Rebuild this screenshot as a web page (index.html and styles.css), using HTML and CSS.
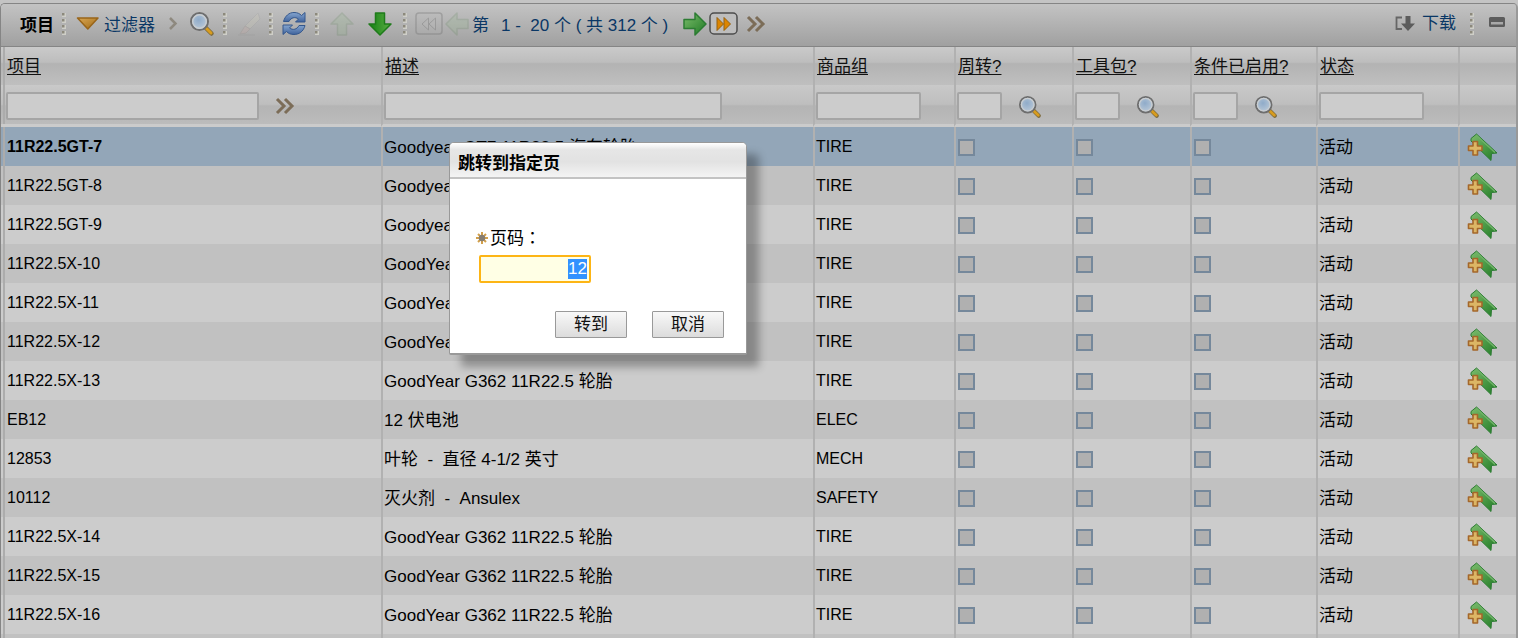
FILE: index.html
```html
<!DOCTYPE html>
<html lang="zh-CN">
<head>
<meta charset="utf-8">
<title>项目</title>
<link rel="stylesheet" href="styles.css">
</head>
<body>
<svg class="defs" aria-hidden="true">
  <defs>
    <linearGradient id="gGreen" x1="0" y1="0" x2="1" y2="1"><stop offset="0" stop-color="#7cbc6c"/><stop offset="1" stop-color="#1f7a24"/></linearGradient>
    <linearGradient id="gDown" x1="0" y1="0" x2="0" y2="1"><stop offset="0" stop-color="#5cae45"/><stop offset="1" stop-color="#138012"/></linearGradient>
    <linearGradient id="gBlue" x1="0" y1="0" x2="0" y2="1"><stop offset="0" stop-color="#86a6d0"/><stop offset="1" stop-color="#3f639c"/></linearGradient>
    <linearGradient id="gGold" x1="0" y1="0" x2="1" y2="1"><stop offset="0" stop-color="#d9a755"/><stop offset="1" stop-color="#a06a14"/></linearGradient>
    <radialGradient id="gLens" cx=".45" cy=".4" r=".6"><stop offset="0" stop-color="#8fabc9"/><stop offset="1" stop-color="#bccad8"/></radialGradient>
    <symbol id="sep" viewBox="0 0 4 24">
      <g fill="#cfcfc8"><path d="M0 1h4v4H0zM0 7h4v4H0zM0 13h4v4H0zM0 19h4v4H0z"/></g>
      <g fill="#8c897c"><path d="M0 1h2.500v2.500H0zM0 7h2.500v2.500H0zM0 13h2.500v2.500H0zM0 19h2.500v2.500H0z"/></g>
    </symbol>
    <symbol id="lens" viewBox="0 0 26 26">
      <path d="M16 16l6.500 6.500" stroke="#7d6a3c" stroke-width="4.500" stroke-linecap="round"/>
      <path d="M17.500 17.500l4.500 4.500" stroke="#d89c1e" stroke-width="3" stroke-linecap="round"/>
      <circle cx="10.500" cy="10.500" r="8.500" fill="url(#gLens)" stroke="#6e6e6e" stroke-width="2"/>
      <circle cx="10.500" cy="10.500" r="6.800" fill="none" stroke="#c9cdd0" stroke-width="1.400"/>
    </symbol>
    <symbol id="more" viewBox="0 0 20 18">
      <path d="M2 2l7 7-7 7M10 2l7 7-7 7" fill="none" stroke="#7c6d58" stroke-width="3"/>
    </symbol>
    <symbol id="mark" viewBox="0 0 32 30">
      <path d="M4 6.500L9.500 2 30 21l-5.500.5-.5 7L4 9z" fill="url(#gGreen)" stroke="#2c7c33" stroke-width="1"/>
      <path d="M9.500 3.500L28 20.500" stroke="#6fb267" stroke-width="1.500"/>
      <path d="M6 9.500h4.500V14H15v4.500h-4.500V23H6v-4.500H1.500V14H6z" fill="#dcb665" stroke="#a4672b" stroke-width="1.600" stroke-linejoin="round"/>
    </symbol>
    <symbol id="arrow" viewBox="0 0 24 26">
      <path d="M1 8.500h11V2l11 11-11 11v-6.500H1z" stroke-width="1.500" stroke-linejoin="round"/>
    </symbol>
  </defs>
</svg>

<main class="panel">
  <header class="toolbar">
    <h1 class="title">项目</h1>
    <svg class="sep"><use href="#sep"/></svg>
    <button class="tool filter" type="button">
      <svg width="26" height="18" viewBox="0 0 26 18"><path d="M3.500 3h20.500L13.800 14z" fill="url(#gGold)" stroke="#99651a" stroke-width="1.500" stroke-linejoin="round"/></svg>
      <span class="caption">过滤器</span>
    </button>
    <svg width="18" height="18" viewBox="0 0 18 18"><path d="M7 3l5.500 5.500L7 14" fill="none" stroke="#8e897f" stroke-width="2.500"/></svg>
    <button class="tool" type="button" aria-label="搜索"><svg width="26" height="26"><use href="#lens"/></svg></button>
    <svg class="sep"><use href="#sep"/></svg>
    <button class="tool faded" type="button" aria-label="清除">
      <svg width="26" height="26" viewBox="0 0 26 26"><path d="M23 2l2 6-10 10-5-3z" fill="#d8d5bd" stroke="#999"/><path d="M10 15l5 3-4 4-6 1z" fill="#d3aba4" stroke="#97837d"/><path d="M3 24h17" stroke="#888"/></svg>
    </button>
    <svg class="sep"><use href="#sep"/></svg>
    <button class="tool" type="button" aria-label="刷新">
      <svg width="26" height="26" viewBox="0 0 26 26" fill="url(#gBlue)" stroke="#34578c" stroke-width="1" stroke-linejoin="round"><path d="M2.500 10.500C4 5 8 1.500 13 1.500c3.500 0 5.500 1 7.500 3L24 1.500V11H14.500l3-3C14 5.500 10 6.500 8 10.500z"/><path d="M24 14.500c-1.500 6-6 9-11 9-3.500 0-5.500-1-7.500-3L2 23.500V14h9.500l-3 3c3.500 2.500 7.500 1.500 9.500-2.500z"/></svg>
    </button>
    <svg class="sep"><use href="#sep"/></svg>
    <button class="tool faded wide" type="button" aria-label="上一行"><svg width="24" height="26" fill="#8cb884" stroke="#56804f"><use href="#arrow" transform="rotate(-90 12 13)"/></svg></button>
    <button class="tool wide" type="button" aria-label="下一行"><svg width="24" height="26" fill="url(#gDown)" stroke="#1f7b1b"><use href="#arrow" transform="rotate(90 12 13)"/></svg></button>
    <svg class="sep"><use href="#sep"/></svg>
    <div class="pager">
      <button class="tool faded-box" type="button" aria-label="第一页"><svg width="28" height="24" viewBox="0 0 28 24"><rect x="1" y="1" width="26" height="21" rx="3" fill="none" stroke="#777" stroke-width="1.500"/><path d="M13.500 6v12L7 12zM20.500 6v12L14 12z" fill="#b8b8b8" stroke="#777"/></svg></button>
      <button class="tool faded" type="button" aria-label="上一页"><svg width="24" height="26" fill="#8cb884" stroke="#56804f"><use href="#arrow" transform="rotate(180 12 13)"/></svg></button>
      <span class="range"><span>第</span><span>1 -&nbsp; 20 个 ( 共 312 个 )</span></span>
      <button class="tool" type="button" aria-label="下一页"><svg width="24" height="26" fill="url(#gGreen)" stroke="#2c7c33"><use href="#arrow"/></svg></button>
      <button class="tool" type="button" aria-label="跳转到指定页"><svg width="29" height="24" viewBox="0 0 29 24"><rect x="1" y="1" width="27" height="21" rx="4" fill="#bdbdbd" stroke="#4c4c4c" stroke-width="1.500"/><path d="M8 5.500l6.500 6.500L8 18.500zM15 5.500l6.500 6.500-6.500 6.500z" fill="#dc8500" stroke="#95600f"/></svg></button>
    </div>
    <button class="tool" type="button" aria-label="更多"><svg width="20" height="18"><use href="#more"/></svg></button>
    <div class="toolbar-end">
      <button class="tool download" type="button">
        <svg width="22" height="20" viewBox="0 0 22 20"><path d="M8 3.500H2.500V15H8" fill="none" stroke="#666" stroke-width="1.800"/><path d="M11.500 2h5v7.500H21l-7 7.500-7-7.500h4.500z" fill="#5c5c5c"/></svg>
        下载
      </button>
      <svg class="sep"><use href="#sep"/></svg>
      <button class="tool minimise" type="button" aria-label="最小化"><svg width="18" height="12" viewBox="0 0 18 12"><rect x="1" y="1" width="16" height="10" rx="1.500" fill="#5c5c5c"/><path d="M3 6h12v2.500H3z" fill="#a8a8a8"/></svg></button>
    </div>
  </header>

  <table class="grid">
    <colgroup>
      <col class="c-item"><col><col class="c-group"><col class="c-flag"><col class="c-flag"><col class="c-cond"><col class="c-status"><col class="c-mark">
    </colgroup>
    <thead>
      <tr class="heads">
        <th scope="col"><a href="#item">项目</a></th>
        <th scope="col"><a href="#desc">描述</a></th>
        <th scope="col"><a href="#group">商品组</a></th>
        <th scope="col"><a href="#rotate">周转?</a></th>
        <th scope="col"><a href="#kit">工具包?</a></th>
        <th scope="col"><a href="#cond">条件已启用?</a></th>
        <th scope="col"><a href="#status">状态</a></th>
        <td></td>
      </tr>
      <tr class="filters">
        <td><div class="cell"><input class="f-item" type="text" aria-label="项目"><button class="tool" type="button" aria-label="项目选项"><svg width="20" height="18"><use href="#more"/></svg></button></div></td>
        <td><div class="cell"><input class="f-desc" type="text" aria-label="描述"></div></td>
        <td><div class="cell"><input class="f-mid" type="text" aria-label="商品组"></div></td>
        <td><div class="cell"><input class="f-flag" type="text" aria-label="周转?"><button class="tool find" type="button" aria-label="查找周转"><svg width="24" height="24"><use href="#lens"/></svg></button></div></td>
        <td><div class="cell"><input class="f-flag" type="text" aria-label="工具包?"><button class="tool find" type="button" aria-label="查找工具包"><svg width="24" height="24"><use href="#lens"/></svg></button></div></td>
        <td><div class="cell"><input class="f-flag" type="text" aria-label="条件已启用?"><button class="tool find" type="button" aria-label="查找条件已启用"><svg width="24" height="24"><use href="#lens"/></svg></button></div></td>
        <td><div class="cell"><input class="f-mid" type="text" aria-label="状态"></div></td>
        <td></td>
      </tr>
    </thead>
    <tbody id="rows"></tbody>
  </table>
</main>

<section class="dialog" role="dialog" aria-labelledby="dlg-title">
  <h2 class="dialog-title" id="dlg-title">跳转到指定页</h2>
  <form class="dialog-body">
    <label class="page-label" for="page">
      <svg width="12" height="12" viewBox="0 0 12 12"><path d="M6 0v12M0 6h12M2 2l8 8M10 2l-8 8" stroke="#d3a04a" stroke-width="2"/><circle cx="6" cy="6" r="3.200" fill="#857d72"/></svg>
      <span>页码<span lang="zh-TW">：</span></span>
    </label>
    <input class="page-input" id="page" type="text" value="12">
    <div class="actions">
      <button class="btn" type="button">转到</button>
      <button class="btn" type="button">取消</button>
    </div>
  </form>
</section>
<script src="app.js"></script>
</body>
</html>
```

FILE: styles.css
```css
* { box-sizing: border-box; }

body {
  margin: 0;
  height: 100vh;
  overflow: hidden;
  background: #c4c4c4;
  color: #000;
  font: 16px/20px "Liberation Sans", "Noto Sans CJK SC", sans-serif;
}

svg { display: block; flex: none; }
.defs { position: absolute; width: 0; height: 0; }

.panel {
  max-height: calc(100vh - 3px);
  margin-top: 3px;
  border: 1px solid #858585;
  border-right: 2px solid #999;
  border-bottom: 0;
  border-radius: 5px 5px 0 0;
  overflow: hidden;
}

.toolbar {
  display: flex;
  align-items: center;
  gap: 8px;
  height: 43px;
  padding: 0 10px 2px 19px;
  border-bottom: 1px solid #858585;
  background: linear-gradient(#c3c3c3, #a0a0a0);
}

.title { margin: 0; padding-top: 4px; font-size: 17px; font-weight: 700; }
.sep { width: 4px; height: 24px; }

.tool {
  display: flex;
  align-items: center;
  justify-content: center;
  flex: none;
  padding: 0;
  border: 0;
  background: none;
  color: #0a3765;
  font: inherit;
  font-size: 17px;
}
.wide { width: 30px; }
.faded { opacity: .2; }
.faded-box { opacity: .4; }
.filter { gap: 4px; }
.caption { padding-top: 3px; }
.download { gap: 6px; }

.pager { display: flex; align-items: center; gap: 2px; }
.range {
  display: flex;
  gap: 12px;
  min-width: 210px;
  padding: 3px 0 0 1px;
  color: #0a3765;
  font-size: 17px;
  white-space: nowrap;
}
.toolbar-end { display: flex; align-items: center; gap: 14px; margin-left: auto; }
.minimise { padding-bottom: 5px; }

.grid {
  width: 100%;
  table-layout: fixed;
  border-spacing: 0;
}
.c-item { width: 380px; }
.c-group { width: 141px; }
.c-flag { width: 118px; }
.c-cond { width: 126px; }
.c-status { width: 142px; }
.c-mark { width: 58px; }

.grid th,
.grid td {
  height: 39px;
  padding: 0 0 0 1px;
  border-left: 2px solid #b1b1b1;
  text-align: left;
  font-weight: 400;
  white-space: nowrap;
}
.grid th:first-child,
.grid td:first-child {
  padding-left: 6px;
  border-left: 0;
  background: linear-gradient(#acacac, #acacac) 2px 0 / 2px 100% no-repeat;
}
.grid .heads th,
.grid .heads td { height: 38px; padding: 2px 0 0 2px; font-size: 17px; }
.grid .heads th:first-child { padding-left: 6px; }
.heads { background: linear-gradient(#cacaca, #bdbdbd 40%, #b3b3b3 44%, #bfbfbf); }
.heads a { color: #111; text-decoration: underline; text-underline-offset: 2px; }

.filters { background: linear-gradient(#c9c9c9, #bebebe 46%, #b4b4b4 50%, #bdbdbd); }
.grid .filters td { height: 42px; border-bottom: 3px solid #cbcbcb; }
.grid .filters td:first-child { padding-left: 5px; }
.cell { display: flex; align-items: center; gap: 16px; padding-top: 2px; }
.cell input {
  height: 28px;
  min-width: 0;
  padding: 0 4px;
  border: 2px solid #a5a5a5;
  border-radius: 2px;
  background: #cccccc;
  font: inherit;
}
.cell .find { padding-top: 3px; }
.f-item { width: 253px; }
.f-desc { width: 338px; }
.f-mid { width: 105px; }
.f-flag { width: 45px; }

tbody tr { background: #cccccc; }
tbody tr:nth-child(even) { background: #c1c1c1; }
tbody tr.selected { background: #93a6b8; }
.selected td:first-child { font-weight: 700; }
.grid td.desc { padding-top: 2px; font-size: 17px; }
.grid td.status { padding-top: 2px; font-size: 17px; }
.grid td.mark { padding-left: 7px; }
.grid td.flag { padding: 2px 0 0 2px; }
.flag input {
  display: block;
  appearance: none;
  width: 17px;
  height: 17px;
  margin: 0;
  border: 2px solid #75889b;
  background: #b0b0b0;
}

.dialog {
  position: absolute;
  left: 449px;
  top: 142px;
  width: 298px;
  border: 1px solid #999;
  border-bottom-width: 2px;
  border-radius: 5px 5px 2px 2px;
  background: #fff;
  box-shadow: 12px 12px 8px rgba(0, 0, 0, .3);
}
.dialog-title {
  margin: 0;
  padding: 11px 8px 3px;
  border-bottom: 2px solid #c3c3c3;
  border-radius: 4px 4px 0 0;
  background: linear-gradient(#fff, #e6e6e6 20%, #e2e2e2 55%, #f4f4f4);
  font-size: 17px;
  line-height: 20px;
}
.dialog-body { padding: 46px 22px 15px 26px; }
.page-label {
  display: flex;
  align-items: center;
  gap: 2px;
  font-size: 17px;
  line-height: 24px;
}
.page-label [lang] { font-family: "Noto Sans CJK TC", sans-serif; }
.page-input {
  display: block;
  width: 112px;
  height: 28px;
  margin: 4px 0 0 3px;
  padding: 0 2px;
  border: 2px solid #fdb515;
  border-radius: 2px;
  outline: 0;
  background: #ffffe5;
  font: 17px "Liberation Sans", sans-serif;
  text-align: right;
}
.page-input::selection { background: #3392ff; color: #fff; }
.actions { display: flex; justify-content: flex-end; gap: 25px; margin-top: 28px; }
.btn {
  width: 72px;
  height: 27px;
  padding: 0;
  border: 1px solid #999;
  border-radius: 1px;
  background: linear-gradient(#f8f8f8, #dcdcdc);
  color: #111;
  font: inherit;
  font-size: 17px;
}
```

FILE: app.js
```js
const items = [
  ["11R22.5GT-7", "Goodyear GT7 11R22.5 汽车轮胎", "TIRE"],
  ["11R22.5GT-8", "Goodyear", "TIRE"],
  ["11R22.5GT-9", "Goodyear", "TIRE"],
  ["11R22.5X-10", "GoodYear", "TIRE"],
  ["11R22.5X-11", "GoodYear", "TIRE"],
  ["11R22.5X-12", "GoodYear", "TIRE"],
  ["11R22.5X-13", "GoodYear G362 11R22.5 轮胎", "TIRE"],
  ["EB12", "12 伏电池", "ELEC"],
  ["12853", "叶轮 \u00a0-\u00a0 直径 4-1/2 英寸", "MECH"],
  ["10112", "灭火剂 \u00a0-\u00a0 Ansulex", "SAFETY"],
  ["11R22.5X-14", "GoodYear G362 11R22.5 轮胎", "TIRE"],
  ["11R22.5X-15", "GoodYear G362 11R22.5 轮胎", "TIRE"],
  ["11R22.5X-16", "GoodYear G362 11R22.5 轮胎", "TIRE"],
  ["", "", ""]
];
const flags = ["周转", "工具包", "条件已启用"];

document.getElementById("rows").innerHTML = items.map(([id, desc, group], i) => {
  const boxes = flags.map(f =>
    `<td class="flag">${id ? `<input type="checkbox" aria-label="${id} ${f}">` : ""}</td>`).join("");
  const mark = id
    ? `<button class="tool" type="button" aria-label="收藏 ${id}"><svg width="32" height="30"><use href="#mark"/></svg></button>`
    : "";
  return `<tr${i === 0 ? ' class="selected"' : ""}><td>${id}</td><td class="desc">${desc}</td><td>${group}</td>${boxes}<td class="status">${id ? "活动" : ""}</td><td class="mark">${mark}</td></tr>`;
}).join("");

const page = document.getElementById("page");
page.focus();
page.select();
```
